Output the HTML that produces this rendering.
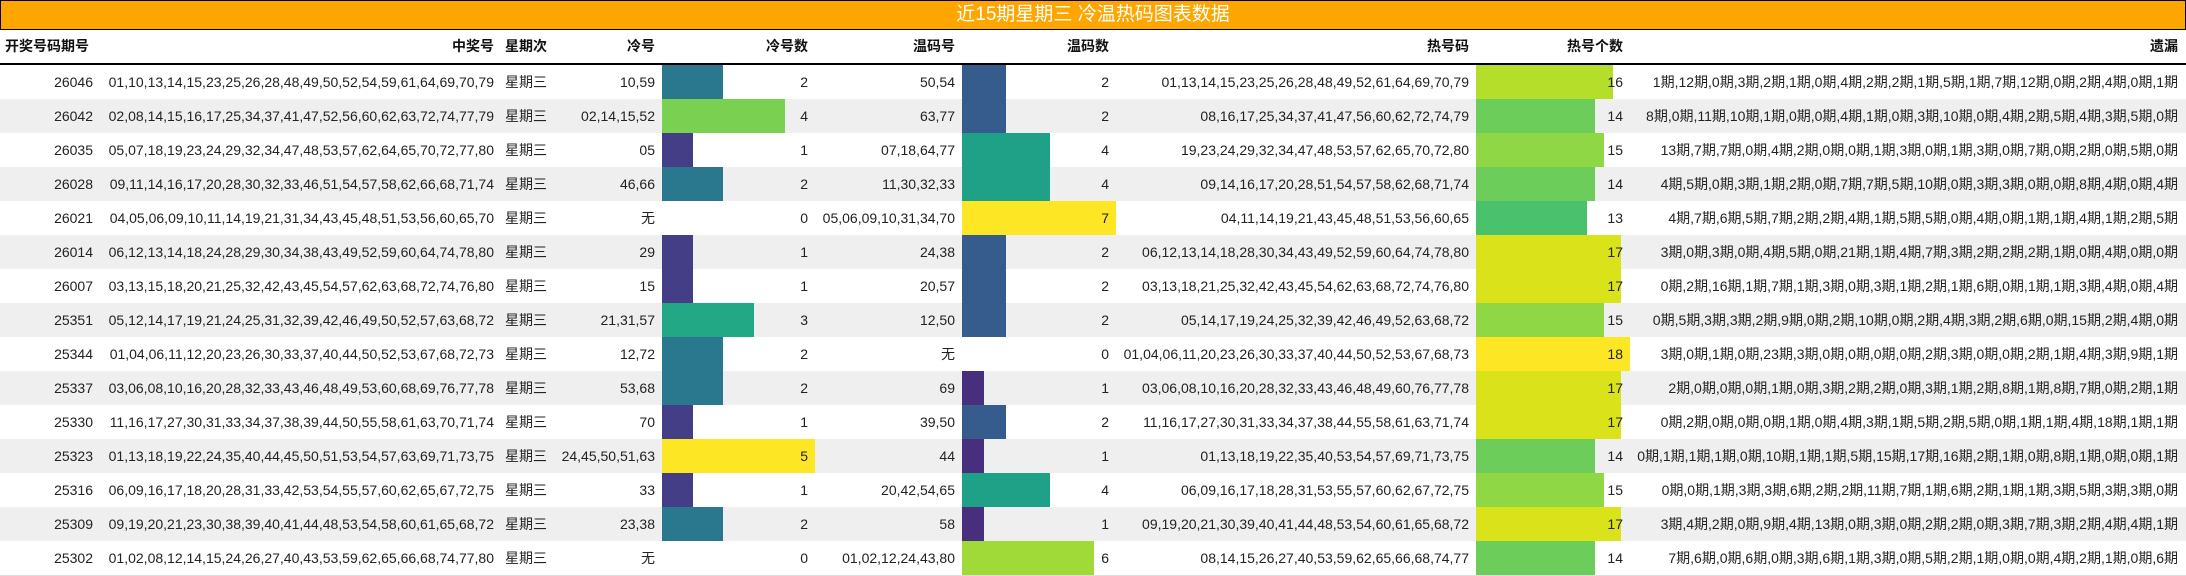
<!DOCTYPE html>
<html><head><meta charset="utf-8">
<style>
*{margin:0;padding:0;box-sizing:border-box}
body{width:2186px;height:576px;background:#fff;font-family:"Liberation Sans","Noto Sans CJK SC",sans-serif;font-size:14px;color:#222;position:relative;overflow:hidden}
#t{position:absolute;left:0;top:0;width:2186px;height:30px;background:#ffa500;border:1px solid #000;color:#fff;font-size:19px;line-height:28px;text-align:center}
#h{position:absolute;left:0;top:30px;width:2186px;height:35px;border-bottom:2px solid #000;font-weight:bold;color:#111}
.r{position:absolute;left:0;width:2186px;height:34px;line-height:34px}
.g{background:#efefef}
.r span,#h span{position:absolute;top:0;white-space:nowrap}
#h span{line-height:33px}
.b{position:absolute;top:0;height:34px}
.a{text-align:right}
.c0{left:0;width:93px}.c1{left:98px;width:396px}.c2{left:505px}.c3{left:560px;width:95px}
.c4{left:662px;width:146px}.c5{left:813px;width:142px}.c6{left:962px;width:147px}
.c7{left:1114px;width:355px}.c8{left:1476px;width:147px}.c9{left:1628px;width:550px}
</style></head><body>
<div id="t">近15期星期三 冷温热码图表数据</div>
<div id="h">
<span style="left:5px">开奖号码期号</span>
<span class="a c1">中奖号</span>
<span class="c2">星期次</span>
<span style="right:1531px">冷号</span>
<span class="a c4">冷号数</span>
<span class="a c5">温码号</span>
<span class="a c6">温码数</span>
<span class="a c7">热号码</span>
<span class="a c8">热号个数</span>
<span class="a c9">遗漏</span>
</div>

<div class="r" style="top:65px">
<div class="b" style="left:662px;width:61px;background:#2a788e"></div>
<div class="b" style="left:962px;width:44px;background:#365c8d"></div>
<div class="b" style="left:1476px;width:137px;background:#b5de2b"></div>
<span class="a c0">26046</span><span class="a c1">01,10,13,14,15,23,25,26,28,48,49,50,52,54,59,61,64,69,70,79</span><span class="c2">星期三</span><span class="a c3">10,59</span><span class="a c4">2</span><span class="a c5">50,54</span><span class="a c6">2</span><span class="a c7">01,13,14,15,23,25,26,28,48,49,52,61,64,69,70,79</span><span class="a c8">16</span><span class="a c9">1期,12期,0期,3期,2期,1期,0期,4期,2期,2期,1期,5期,1期,7期,12期,0期,2期,4期,0期,1期</span>
</div>

<div class="r g" style="top:99px">
<div class="b" style="left:662px;width:123px;background:#7ad151"></div>
<div class="b" style="left:962px;width:44px;background:#365c8d"></div>
<div class="b" style="left:1476px;width:119px;background:#6ccd5a"></div>
<span class="a c0">26042</span><span class="a c1">02,08,14,15,16,17,25,34,37,41,47,52,56,60,62,63,72,74,77,79</span><span class="c2">星期三</span><span class="a c3">02,14,15,52</span><span class="a c4">4</span><span class="a c5">63,77</span><span class="a c6">2</span><span class="a c7">08,16,17,25,34,37,41,47,56,60,62,72,74,79</span><span class="a c8">14</span><span class="a c9">8期,0期,11期,10期,1期,0期,0期,4期,1期,0期,3期,10期,0期,4期,2期,5期,4期,3期,5期,0期</span>
</div>

<div class="r" style="top:133px">
<div class="b" style="left:662px;width:31px;background:#433e85"></div>
<div class="b" style="left:962px;width:88px;background:#1fa187"></div>
<div class="b" style="left:1476px;width:128px;background:#8fd744"></div>
<span class="a c0">26035</span><span class="a c1">05,07,18,19,23,24,29,32,34,47,48,53,57,62,64,65,70,72,77,80</span><span class="c2">星期三</span><span class="a c3">05</span><span class="a c4">1</span><span class="a c5">07,18,64,77</span><span class="a c6">4</span><span class="a c7">19,23,24,29,32,34,47,48,53,57,62,65,70,72,80</span><span class="a c8">15</span><span class="a c9">13期,7期,7期,0期,4期,2期,0期,0期,1期,3期,0期,1期,3期,0期,7期,0期,2期,0期,5期,0期</span>
</div>

<div class="r g" style="top:167px">
<div class="b" style="left:662px;width:61px;background:#2a788e"></div>
<div class="b" style="left:962px;width:88px;background:#1fa187"></div>
<div class="b" style="left:1476px;width:119px;background:#6ccd5a"></div>
<span class="a c0">26028</span><span class="a c1">09,11,14,16,17,20,28,30,32,33,46,51,54,57,58,62,66,68,71,74</span><span class="c2">星期三</span><span class="a c3">46,66</span><span class="a c4">2</span><span class="a c5">11,30,32,33</span><span class="a c6">4</span><span class="a c7">09,14,16,17,20,28,51,54,57,58,62,68,71,74</span><span class="a c8">14</span><span class="a c9">4期,5期,0期,3期,1期,2期,0期,7期,7期,5期,10期,0期,3期,3期,0期,0期,8期,4期,0期,4期</span>
</div>

<div class="r" style="top:201px">
<div class="b" style="left:962px;width:154px;background:#fde725"></div>
<div class="b" style="left:1476px;width:111px;background:#4ac16d"></div>
<span class="a c0">26021</span><span class="a c1">04,05,06,09,10,11,14,19,21,31,34,43,45,48,51,53,56,60,65,70</span><span class="c2">星期三</span><span class="a c3">无</span><span class="a c4">0</span><span class="a c5">05,06,09,10,31,34,70</span><span class="a c6">7</span><span class="a c7">04,11,14,19,21,43,45,48,51,53,56,60,65</span><span class="a c8">13</span><span class="a c9">4期,7期,6期,5期,7期,2期,2期,4期,1期,5期,5期,0期,4期,0期,1期,1期,4期,1期,2期,5期</span>
</div>

<div class="r g" style="top:235px">
<div class="b" style="left:662px;width:31px;background:#433e85"></div>
<div class="b" style="left:962px;width:44px;background:#365c8d"></div>
<div class="b" style="left:1476px;width:145px;background:#dae319"></div>
<span class="a c0">26014</span><span class="a c1">06,12,13,14,18,24,28,29,30,34,38,43,49,52,59,60,64,74,78,80</span><span class="c2">星期三</span><span class="a c3">29</span><span class="a c4">1</span><span class="a c5">24,38</span><span class="a c6">2</span><span class="a c7">06,12,13,14,18,28,30,34,43,49,52,59,60,64,74,78,80</span><span class="a c8">17</span><span class="a c9">3期,0期,3期,0期,4期,5期,0期,21期,1期,4期,7期,3期,2期,2期,2期,1期,0期,4期,0期,0期</span>
</div>

<div class="r" style="top:269px">
<div class="b" style="left:662px;width:31px;background:#433e85"></div>
<div class="b" style="left:962px;width:44px;background:#365c8d"></div>
<div class="b" style="left:1476px;width:145px;background:#dae319"></div>
<span class="a c0">26007</span><span class="a c1">03,13,15,18,20,21,25,32,42,43,45,54,57,62,63,68,72,74,76,80</span><span class="c2">星期三</span><span class="a c3">15</span><span class="a c4">1</span><span class="a c5">20,57</span><span class="a c6">2</span><span class="a c7">03,13,18,21,25,32,42,43,45,54,62,63,68,72,74,76,80</span><span class="a c8">17</span><span class="a c9">0期,2期,16期,1期,7期,1期,3期,0期,3期,1期,2期,1期,6期,0期,1期,1期,3期,4期,0期,4期</span>
</div>

<div class="r g" style="top:303px">
<div class="b" style="left:662px;width:92px;background:#22a884"></div>
<div class="b" style="left:962px;width:44px;background:#365c8d"></div>
<div class="b" style="left:1476px;width:128px;background:#8fd744"></div>
<span class="a c0">25351</span><span class="a c1">05,12,14,17,19,21,24,25,31,32,39,42,46,49,50,52,57,63,68,72</span><span class="c2">星期三</span><span class="a c3">21,31,57</span><span class="a c4">3</span><span class="a c5">12,50</span><span class="a c6">2</span><span class="a c7">05,14,17,19,24,25,32,39,42,46,49,52,63,68,72</span><span class="a c8">15</span><span class="a c9">0期,5期,3期,3期,2期,9期,0期,2期,10期,0期,2期,4期,3期,2期,6期,0期,15期,2期,4期,0期</span>
</div>

<div class="r" style="top:337px">
<div class="b" style="left:662px;width:61px;background:#2a788e"></div>
<div class="b" style="left:1476px;width:154px;background:#fde725"></div>
<span class="a c0">25344</span><span class="a c1">01,04,06,11,12,20,23,26,30,33,37,40,44,50,52,53,67,68,72,73</span><span class="c2">星期三</span><span class="a c3">12,72</span><span class="a c4">2</span><span class="a c5">无</span><span class="a c6">0</span><span class="a c7">01,04,06,11,20,23,26,30,33,37,40,44,50,52,53,67,68,73</span><span class="a c8">18</span><span class="a c9">3期,0期,1期,0期,23期,3期,0期,0期,0期,0期,2期,3期,0期,0期,2期,1期,4期,3期,9期,1期</span>
</div>

<div class="r g" style="top:371px">
<div class="b" style="left:662px;width:61px;background:#2a788e"></div>
<div class="b" style="left:962px;width:22px;background:#472f7d"></div>
<div class="b" style="left:1476px;width:145px;background:#dae319"></div>
<span class="a c0">25337</span><span class="a c1">03,06,08,10,16,20,28,32,33,43,46,48,49,53,60,68,69,76,77,78</span><span class="c2">星期三</span><span class="a c3">53,68</span><span class="a c4">2</span><span class="a c5">69</span><span class="a c6">1</span><span class="a c7">03,06,08,10,16,20,28,32,33,43,46,48,49,60,76,77,78</span><span class="a c8">17</span><span class="a c9">2期,0期,0期,0期,1期,0期,3期,2期,2期,0期,3期,1期,2期,8期,1期,8期,7期,0期,2期,1期</span>
</div>

<div class="r" style="top:405px">
<div class="b" style="left:662px;width:31px;background:#433e85"></div>
<div class="b" style="left:962px;width:44px;background:#365c8d"></div>
<div class="b" style="left:1476px;width:145px;background:#dae319"></div>
<span class="a c0">25330</span><span class="a c1">11,16,17,27,30,31,33,34,37,38,39,44,50,55,58,61,63,70,71,74</span><span class="c2">星期三</span><span class="a c3">70</span><span class="a c4">1</span><span class="a c5">39,50</span><span class="a c6">2</span><span class="a c7">11,16,17,27,30,31,33,34,37,38,44,55,58,61,63,71,74</span><span class="a c8">17</span><span class="a c9">0期,2期,0期,0期,0期,1期,0期,4期,3期,1期,5期,2期,5期,0期,1期,1期,4期,18期,1期,1期</span>
</div>

<div class="r g" style="top:439px">
<div class="b" style="left:662px;width:153px;background:#fde725"></div>
<div class="b" style="left:962px;width:22px;background:#472f7d"></div>
<div class="b" style="left:1476px;width:119px;background:#6ccd5a"></div>
<span class="a c0">25323</span><span class="a c1">01,13,18,19,22,24,35,40,44,45,50,51,53,54,57,63,69,71,73,75</span><span class="c2">星期三</span><span class="a c3">24,45,50,51,63</span><span class="a c4">5</span><span class="a c5">44</span><span class="a c6">1</span><span class="a c7">01,13,18,19,22,35,40,53,54,57,69,71,73,75</span><span class="a c8">14</span><span class="a c9">0期,1期,1期,1期,0期,10期,1期,1期,5期,15期,17期,16期,2期,1期,0期,8期,1期,0期,0期,1期</span>
</div>

<div class="r" style="top:473px">
<div class="b" style="left:662px;width:31px;background:#433e85"></div>
<div class="b" style="left:962px;width:88px;background:#1fa187"></div>
<div class="b" style="left:1476px;width:128px;background:#8fd744"></div>
<span class="a c0">25316</span><span class="a c1">06,09,16,17,18,20,28,31,33,42,53,54,55,57,60,62,65,67,72,75</span><span class="c2">星期三</span><span class="a c3">33</span><span class="a c4">1</span><span class="a c5">20,42,54,65</span><span class="a c6">4</span><span class="a c7">06,09,16,17,18,28,31,53,55,57,60,62,67,72,75</span><span class="a c8">15</span><span class="a c9">0期,0期,1期,3期,3期,6期,2期,2期,11期,7期,1期,6期,2期,1期,1期,3期,5期,3期,3期,0期</span>
</div>

<div class="r g" style="top:507px">
<div class="b" style="left:662px;width:61px;background:#2a788e"></div>
<div class="b" style="left:962px;width:22px;background:#472f7d"></div>
<div class="b" style="left:1476px;width:145px;background:#dae319"></div>
<span class="a c0">25309</span><span class="a c1">09,19,20,21,23,30,38,39,40,41,44,48,53,54,58,60,61,65,68,72</span><span class="c2">星期三</span><span class="a c3">23,38</span><span class="a c4">2</span><span class="a c5">58</span><span class="a c6">1</span><span class="a c7">09,19,20,21,30,39,40,41,44,48,53,54,60,61,65,68,72</span><span class="a c8">17</span><span class="a c9">3期,4期,2期,0期,9期,4期,13期,0期,3期,0期,2期,2期,0期,3期,7期,3期,2期,4期,4期,1期</span>
</div>

<div class="r" style="top:541px">
<div class="b" style="left:962px;width:132px;background:#a0da39"></div>
<div class="b" style="left:1476px;width:119px;background:#6ccd5a"></div>
<span class="a c0">25302</span><span class="a c1">01,02,08,12,14,15,24,26,27,40,43,53,59,62,65,66,68,74,77,80</span><span class="c2">星期三</span><span class="a c3">无</span><span class="a c4">0</span><span class="a c5">01,02,12,24,43,80</span><span class="a c6">6</span><span class="a c7">08,14,15,26,27,40,53,59,62,65,66,68,74,77</span><span class="a c8">14</span><span class="a c9">7期,6期,0期,6期,0期,3期,6期,1期,3期,0期,5期,2期,1期,0期,0期,4期,2期,1期,0期,6期</span>
</div>
<div style="position:absolute;left:0;top:575px;width:2186px;height:1px;background:#ddd"></div>
</body></html>
